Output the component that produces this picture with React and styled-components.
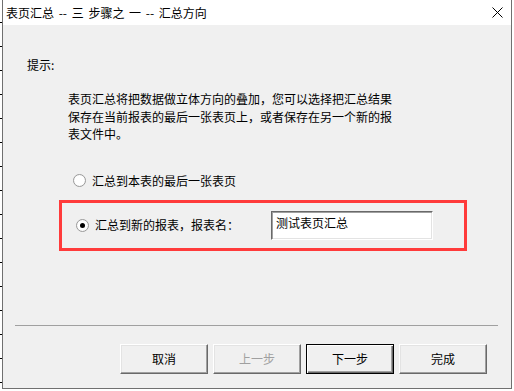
import React from "react";
import styled, { createGlobalStyle } from "styled-components";

const Global = createGlobalStyle`
  html, body { margin: 0; padding: 0; }
  body {
    background-color: #ffffff;
    background-image:
      repeating-linear-gradient(to bottom, transparent 0, transparent 22px, #000 22px, #000 23px, transparent 23px, transparent 24px);
    background-size: 2px 391px;
    background-repeat: no-repeat;
    font-family: "Noto Sans CJK SC", "Noto Sans", sans-serif;
    font-size: 12px;
    color: #000;
    overflow: hidden;
  }
`;

const Window = styled.div`
  margin-left: 2px;
  width: 510px;
  height: 389px;
  box-sizing: border-box;
  border: 1px solid #707070;
  border-top: none;
  display: flex;
  flex-direction: column;
  background: #f0f0f0;
`;

const TitleBar = styled.div`
  height: 25px;
  background: #ffffff;
  display: flex;
  align-items: center;
  justify-content: space-between;
  padding: 0 0 0 3px;
  flex-shrink: 0;
`;

const Title = styled.span`
  font-size: 12px;
  line-height: 18px;
  white-space: pre;
  word-spacing: 2px;
`;

const CloseBtn = styled.div`
  width: 28px;
  height: 25px;
  display: flex;
  align-items: center;
  justify-content: center;
`;

const Body = styled.div`
  flex: 1;
  display: flex;
  flex-direction: column;
  padding-top: 31px;
`;

const Hint = styled.div`
  margin-left: 24px;
  line-height: 18px;
`;

const Para = styled.p`
  margin: 16px 0 0 65px;
  line-height: 17.6px;
`;

const Row = styled.div`
  display: flex;
  align-items: center;
  height: 18px;
  margin-top: ${p => p.$mt || 0}px;
  margin-left: ${p => p.$ml || 0}px;
`;

const Radio = styled.span`
  width: 13px;
  height: 13px;
  box-sizing: border-box;
  border-radius: 50%;
  border: 1px solid #9a9a9a;
  background: radial-gradient(circle at 50% 50%, #ffffff 55%, #eaeaea 100%);
  display: inline-flex;
  align-items: center;
  justify-content: center;
  margin-right: 6px;
  &::after {
    content: "";
    width: 5px;
    height: 5px;
    border-radius: 50%;
    background: ${p => (p.$checked ? "#000" : "transparent")};
  }
`;

const RedBox = styled.div`
  margin: 10px 0 0 56px;
  width: 408px;
  height: 51px;
  box-sizing: border-box;
  border: 3px solid #ff3b3b;
  display: flex;
  align-items: center;
  padding-left: 14px;
`;

const RadioLabel = styled.label`
  display: flex;
  align-items: center;
  width: 195px;
  line-height: 18px;
`;

const TextInput = styled.div`
  width: 162px;
  height: 29px;
  box-sizing: border-box;
  background: #fff;
  border-top: 1px solid #696969;
  border-left: 1px solid #696969;
  border-right: 1px solid #ffffff;
  border-bottom: 1px solid #ffffff;
  box-shadow: inset 1px 1px 0 #a0a0a0, inset -1px -1px 0 #e3e3e3;
  padding: 2px 0 0 4px;
  line-height: 18px;
  margin-top: 1px;
`;

const Separator = styled.div`
  margin: 74px 0 0 12px;
  width: 483px;
  height: 1px;
  background: #a0a0a0;
`;

const Buttons = styled.div`
  display: flex;
  gap: 5px;
  margin: 18px 0 0 117px;
`;

const Button = styled.div`
  width: 88px;
  height: 30px;
  box-sizing: border-box;
  display: flex;
  align-items: center;
  justify-content: center;
  background: #f0f0f0;
  color: ${p => (p.$disabled ? "#a0a0a0" : "#000")};
  border-top: 1px solid ${p => (p.$default ? "#000" : "#ffffff")};
  border-left: 1px solid ${p => (p.$default ? "#000" : "#ffffff")};
  border-right: 1px solid #696969;
  border-bottom: 1px solid #696969;
  box-shadow: ${p =>
    p.$default
      ? "inset 1px 1px 0 #fff, inset -1px -1px 0 #696969, inset -2px -2px 0 #a0a0a0"
      : "inset -1px -1px 0 #a0a0a0, inset 1px 1px 0 #e3e3e3"};
  border-color: ${p => (p.$default ? "#000" : undefined)};
  line-height: 18px;
`;

export default function App() {
  return (
    <>
      <Global />
      <Window>
        <TitleBar>
          <Title>表页汇总 -- 三 步骤之 一 -- 汇总方向</Title>
          <CloseBtn>
            <svg width="11" height="11" viewBox="0 0 11 11">
              <path d="M0.5 0.5 L10.5 10.5 M10.5 0.5 L0.5 10.5" stroke="#000" strokeWidth="1" fill="none" />
            </svg>
          </CloseBtn>
        </TitleBar>
        <Body>
          <Hint>提示:</Hint>
          <Para>
            表页汇总将把数据做立体方向的叠加，您可以选择把汇总结果
            <br />
            保存在当前报表的最后一张表页上，或者保存在另一个新的报
            <br />
            表文件中。
          </Para>
          <Row $mt={29} $ml={70}>
            <Radio />
            <span>汇总到本表的最后一张表页</span>
          </Row>
          <RedBox>
            <RadioLabel>
              <Radio $checked />
              <span>汇总到新的报表，报表名：</span>
            </RadioLabel>
            <TextInput>测试表页汇总</TextInput>
          </RedBox>
          <Separator />
          <Buttons>
            <Button>取消</Button>
            <Button $disabled>上一步</Button>
            <Button $default>下一步</Button>
            <Button>完成</Button>
          </Buttons>
        </Body>
      </Window>
    </>
  );
}
